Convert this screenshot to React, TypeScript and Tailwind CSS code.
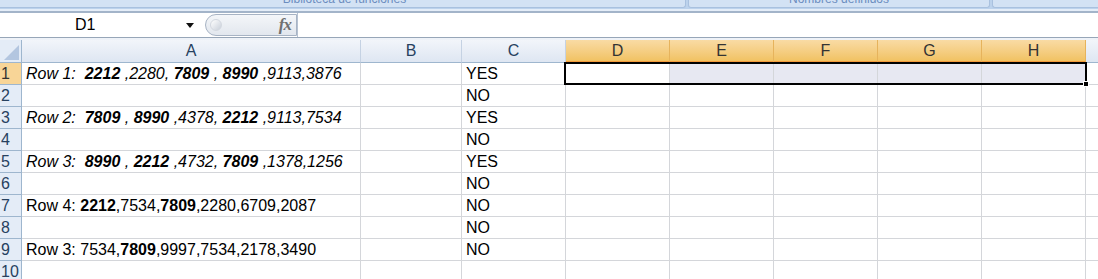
import React from "react";

type Seg = { t: string; b?: boolean };

const colA: { italic: boolean; segs: Seg[] }[] = [
  {
    italic: true,
    segs: [
      { t: "Row 1:  " },
      { t: "2212", b: true },
      { t: " ,2280, " },
      { t: "7809", b: true },
      { t: " , " },
      { t: "8990", b: true },
      { t: " ,9113,3876" },
    ],
  },
  { italic: false, segs: [] },
  {
    italic: true,
    segs: [
      { t: "Row 2:  " },
      { t: "7809", b: true },
      { t: " , " },
      { t: "8990", b: true },
      { t: " ,4378, " },
      { t: "2212", b: true },
      { t: " ,9113,7534" },
    ],
  },
  { italic: false, segs: [] },
  {
    italic: true,
    segs: [
      { t: "Row 3:  " },
      { t: "8990", b: true },
      { t: " , " },
      { t: "2212", b: true },
      { t: " ,4732, " },
      { t: "7809", b: true },
      { t: " ,1378,1256" },
    ],
  },
  { italic: false, segs: [] },
  {
    italic: false,
    segs: [
      { t: "Row 4: " },
      { t: "2212", b: true },
      { t: ",7534," },
      { t: "7809", b: true },
      { t: ",2280,6709,2087" },
    ],
  },
  { italic: false, segs: [] },
  {
    italic: false,
    segs: [
      { t: "Row 3: 7534," },
      { t: "7809", b: true },
      { t: ",9997,7534,2178,3490" },
    ],
  },
  { italic: false, segs: [] },
];

const colC = ["YES", "NO", "YES", "NO", "YES", "NO", "NO", "NO", "NO", ""];

const cols = [
  { name: "A", w: "w-[339px]", sel: false },
  { name: "B", w: "w-[101px]", sel: false },
  { name: "C", w: "w-[104px]", sel: false },
  { name: "D", w: "w-[104px]", sel: true },
  { name: "E", w: "w-[104px]", sel: true },
  { name: "F", w: "w-[104px]", sel: true },
  { name: "G", w: "w-[104px]", sel: true },
  { name: "H", w: "w-[104px]", sel: true },
];

// ribbon group captions, only their lower half shows at the top edge
const RibbonStrip = () => (
  <div className="flex h-[9px] bg-[#bcd2ec] overflow-hidden">
    <div className="w-[686px] h-[8px] bg-[#d3e2f4] border-b border-r border-[#a9c1df] rounded-br-[3px] flex justify-center overflow-hidden">
      <span className="text-[12px] leading-[12px] text-[#6b8dbf] -mt-[7px] pl-[4px]">Biblioteca de funciones</span>
    </div>
    <div className="w-[2px]" />
    <div className="w-[302px] h-[8px] bg-[#d3e2f4] border-b border-x border-[#a9c1df] rounded-b-[3px] flex justify-center overflow-hidden">
      <span className="text-[12px] leading-[12px] text-[#6b8dbf] -mt-[7px]">Nombres definidos</span>
    </div>
    <div className="w-[2px]" />
    <div className="flex-1 h-[8px] bg-[#d3e2f4] border-b border-l border-[#a9c1df] rounded-bl-[3px]" />
  </div>
);

const FormulaBar = () => (
  <div className="flex h-[24px] bg-white">
    <div className="w-[186px] pl-[75px] text-[16px] leading-[24px] text-black">D1</div>
    <div className="w-[19px] flex items-center">
      <svg width="8" height="5" viewBox="0 0 8 5">
        <path d="M0 0 L8 0 L4 5 Z" fill="#111" />
      </svg>
    </div>
    <div className="w-[92px] h-[22px] mt-[1px] rounded-l-[11px] border border-[#a7b3c4] bg-gradient-to-b from-[#f4f6f9] to-[#e2e7ee] flex items-center justify-between pl-[4px] pr-[5px]">
      <div className="w-[12px] h-[12px] rounded-full bg-gradient-to-br from-[#ffffff] to-[#c9d0da] border border-[#d3d8e0]" />
      <span className="text-[17px] italic font-bold text-[#707070] [font-family:'Liberation_Serif',serif] tracking-[-1px]">
        fx
      </span>
    </div>
    <div className="flex-1 border-l border-[#b6c2d2]" />
  </div>
);

const HeaderRow = () => (
  <div className="flex h-[23px]">
    <div className="w-[22px] h-[23px] bg-[#e4ecf7] border-r border-b border-[#9eb6ce] relative">
      <svg className="absolute right-[2px] bottom-[2px]" width="15" height="15" viewBox="0 0 15 15">
        <path d="M15 0 L15 15 L0 15 Z" fill="#b3c6e0" />
      </svg>
    </div>
    {cols.map((c) => (
      <div
        key={c.name}
        className={
          c.sel
            ? `${c.w} h-[23px] text-center leading-[22px] text-[16px] text-[#333333] bg-gradient-to-b from-[#f9dba4] to-[#f1c262] border-r border-[#e6b35c] border-b-2 border-b-[#f29a3b]`
            : `${c.w} h-[23px] text-center leading-[22px] text-[16px] text-[#27415f] bg-gradient-to-b from-[#f2f5fa] to-[#dee6f2] border-r border-[#c5d2e3] border-b border-b-[#9eb6ce]`
        }
      >
        {c.name}
      </div>
    ))}
    <div className="flex-1 h-[23px] bg-gradient-to-b from-[#f2f5fa] to-[#dee6f2] border-b border-[#9eb6ce]" />
  </div>
);

const GridRow = ({ i }: { i: number }) => {
  const a = colA[i];
  const first = i === 0;
  return (
    <div className="flex h-[22px]">
      <div
        className={`w-[22px] h-[22px] pl-[1px] leading-[22px] text-[16px] border-r border-b border-[#9eb6ce] ${
          first ? "bg-[#f8d597] text-[#333333]" : "bg-[#e4ecf7] text-[#27415f]"
        }`}
      >
        {i + 1}
      </div>
      <div
        className={`w-[339px] h-[22px] pl-[4px] leading-[22px] text-[16px] whitespace-pre overflow-hidden border-r border-b border-[#d4d6da] ${
          a.italic ? "italic" : ""
        }`}
      >
        {a.segs.map((s, k) => (
          <span key={k} className={s.b ? "font-bold" : ""}>
            {s.t}
          </span>
        ))}
      </div>
      <div className="w-[101px] h-[22px] border-r border-b border-[#d4d6da]" />
      <div className="w-[104px] h-[22px] pl-[4px] leading-[22px] text-[16px] border-r border-b border-[#d4d6da]">
        {colC[i]}
      </div>
      <div className="w-[104px] h-[22px] border-r border-b border-[#d4d6da]" />
      {["E", "F", "G", "H"].map((n) => (
        <div
          key={n}
          className={`w-[104px] h-[22px] border-r border-b border-[#d4d6da] ${first ? "bg-[#e7e8f2]" : ""}`}
        />
      ))}
      <div className="flex-1 h-[22px] border-b border-[#d4d6da]" />
    </div>
  );
};

export default function App() {
  return (
    <div className="w-[1098px] h-[279px] overflow-hidden bg-white text-black [font-family:'Liberation_Sans',Arial,sans-serif]">
      <RibbonStrip />
      <div className="h-[2px] bg-[#e4edf8]" />
      <div className="h-[2px] bg-[#a3b4c9]" />
      <FormulaBar />
      <div className="h-[1px] bg-[#97a6b8]" />
      <div className="h-[2px] bg-[#eef2f8]" />
      <div className="relative">
        <HeaderRow />
        {colA.map((_, i) => (
          <GridRow key={i} i={i} />
        ))}
        {/* active selection D1:H1 */}
        <div className="absolute left-[564px] top-[22px] w-[523px] h-[23px] border-[2px] border-black pointer-events-none" />
        <div className="absolute left-[1083px] top-[41px] w-[6px] h-[6px] bg-black border border-white" />
      </div>
    </div>
  );
}
